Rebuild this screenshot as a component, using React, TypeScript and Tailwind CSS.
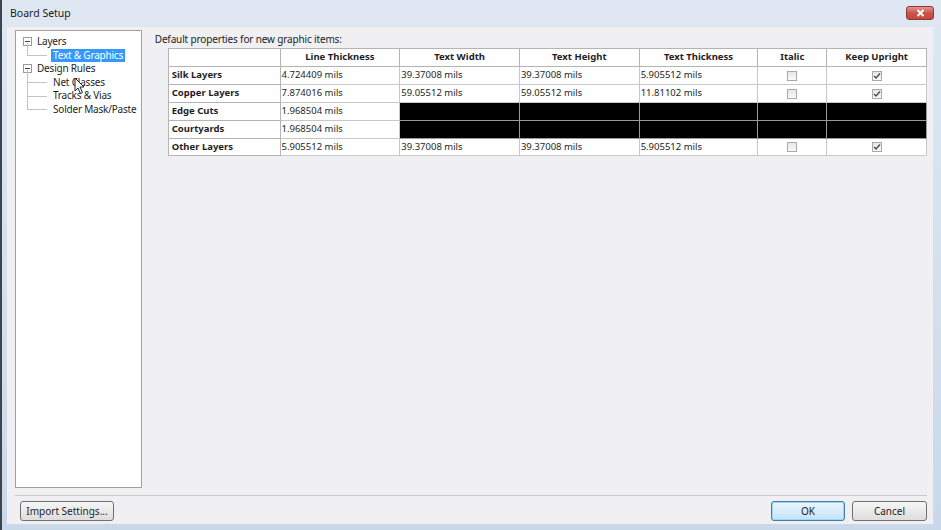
import React from "react";

const cols = ["Line Thickness", "Text Width", "Text Height", "Text Thickness", "Italic", "Keep Upright"];

type Row = {
  name: string;
  values: string[];
  black?: boolean;
};

const rows: Row[] = [
  { name: "Silk Layers", values: ["4.724409 mils", "39.37008 mils", "39.37008 mils", "5.905512 mils"] },
  { name: "Copper Layers", values: ["7.874016 mils", "59.05512 mils", "59.05512 mils", "11.81102 mils"] },
  { name: "Edge Cuts", values: ["1.968504 mils"], black: true },
  { name: "Courtyards", values: ["1.968504 mils"], black: true },
  { name: "Other Layers", values: ["5.905512 mils", "39.37008 mils", "39.37008 mils", "5.905512 mils"] },
];

function Check({ checked }: { checked?: boolean }) {
  return (
    <div className="mx-auto w-[10px] h-[10px] border border-[#a9a9a9] bg-gradient-to-b from-[#e6e6e6] to-[#fafafa] flex items-center justify-center">
      {checked && (
        <svg width="8" height="8" viewBox="0 0 8 8">
          <path d="M1 4 L3 6 L7 1.5" fill="none" stroke="#4a4a4a" strokeWidth="1.3" />
        </svg>
      )}
    </div>
  );
}

function Expander() {
  return (
    <div className="w-[9px] h-[9px] border border-[#9a9a9a] bg-white flex items-center justify-center">
      <div className="w-[5px] h-px bg-[#444]" />
    </div>
  );
}

export default function App() {
  return (
    <div
      className="relative w-[941px] h-[530px] flex flex-col bg-gradient-to-b from-[#dfe8f2] to-[#c9d9ea] border-l-2 border-[#3b4450] overflow-hidden text-[#1e1e1e]"
      style={{ fontFamily: '"Noto Sans", "Open Sans", sans-serif' }}
    >
      {/* title bar */}
      <div className="h-[27px] flex items-center justify-between pl-[8px] pr-[7px]">
        <span className="text-[10.5px] text-[#1a1a1a]">Board Setup</span>
        <div className="w-[28px] h-[14px] mb-[2px] rounded-[3px] border border-[#8a3a35] bg-gradient-to-b from-[#e3958d] via-[#c9544b] to-[#c14a40] flex items-center justify-center">
          <svg width="9" height="8" viewBox="0 0 9 8">
            <path d="M1.5 1 L7.5 7 M7.5 1 L1.5 7" stroke="white" strokeWidth="2" />
          </svg>
        </div>
      </div>

      {/* client area */}
      <div className="flex-1 ml-[5px] mr-[8px] mb-[6px] bg-[#f0eff1] flex flex-col pl-[8px] pr-[6px]">
        <div className="flex mt-[3px]">
          {/* tree */}
          <div className="w-[127px] h-[458px] bg-white border border-[#a0a0a0] text-[10px] tracking-[-0.2px] leading-[13.5px] pt-[4px] pl-[7px] relative whitespace-nowrap">
            <div className="flex items-center gap-[5px]">
              <Expander />
              <span>Layers</span>
            </div>
            <div className="flex items-center">
              <div className="w-[20px] ml-[4px] h-[13px] border-l border-b border-[#c4c4c4] -translate-y-[6px]" />
              <span className="ml-[4px] px-[2px] bg-[#3399ff] text-white">Text &amp; Graphics</span>
            </div>
            <div className="flex items-center gap-[5px]">
              <Expander />
              <span>Design Rules</span>
            </div>
            {["Net Classes", "Tracks & Vias", "Solder Mask/Paste"].map((t) => (
              <div key={t} className="flex items-center">
                <div className="w-[20px] ml-[4px] h-[13.5px] border-l border-b border-[#c4c4c4] -translate-y-[6px]" />
                <span className="ml-[6px]">{t}</span>
              </div>
            ))}
            {/* mouse cursor */}
            <svg className="absolute left-[58px] top-[46px]" width="12" height="18" viewBox="0 0 12 18">
              <path d="M1 1 L1 14 L4 11 L6.5 16.5 L8.5 15.5 L6 10 L10 10 Z" fill="white" stroke="#222" strokeWidth="1" />
            </svg>
          </div>

          {/* right content */}
          <div className="ml-[13px] flex flex-col">
            <div className="text-[10px] tracking-[-0.15px] mt-[1px] h-[16px] leading-[16px]">Default properties for new graphic items:</div>
            <table className="ml-[13px] mt-[1px] border-collapse table-fixed border border-[#9c9c9c] text-[9.5px]">
              <colgroup>
                <col className="w-[112px]" />
                <col className="w-[120px]" />
                <col className="w-[120px]" />
                <col className="w-[120px]" />
                <col className="w-[119px]" />
                <col className="w-[69px]" />
                <col className="w-[100px]" />
              </colgroup>
              <thead>
                <tr className="h-[18px] bg-white">
                  <th className="border border-[#b4b4b4]" />
                  {cols.map((c) => (
                    <th key={c} className="border border-[#b4b4b4] font-bold text-center p-0">
                      {c}
                    </th>
                  ))}
                </tr>
              </thead>
              <tbody>
                {rows.map((r, i) => (
                  <tr key={r.name} className={i === 4 ? "h-[17px]" : "h-[18px]"}>
                    <td className="border border-[#b4b4b4] bg-white font-bold pl-[3px] p-0">{r.name}</td>
                    <td className="border border-[#c8c8c8] bg-white pl-[1px] p-0">{r.values[0]}</td>
                    {r.black ? (
                      [0, 1, 2, 3, 4].map((k) => (
                        <td key={k} className="border border-[#9a9a9a] bg-black p-0" />
                      ))
                    ) : (
                      <>
                        <td className="border border-[#c8c8c8] bg-white pl-[1px] p-0">{r.values[1]}</td>
                        <td className="border border-[#c8c8c8] bg-white pl-[1px] p-0">{r.values[2]}</td>
                        <td className="border border-[#c8c8c8] bg-white pl-[1px] p-0">{r.values[3]}</td>
                        <td className="border border-[#c8c8c8] bg-white p-0">
                          <Check />
                        </td>
                        <td className="border border-[#c8c8c8] bg-white p-0">
                          <Check checked />
                        </td>
                      </>
                    )}
                  </tr>
                ))}
              </tbody>
            </table>
          </div>
        </div>

        <div className="mt-[7px] h-px bg-[#c9c9c9]" />

        <div className="flex items-center mt-[5px] text-[10px]">
          <button className="ml-[5px] w-[94px] h-[20px] rounded-[3px] border border-[#707070] bg-gradient-to-b from-[#f6f6f6] to-[#dddddd]">
            Import Settings...
          </button>
          <div className="flex-1" />
          <button className="w-[74px] h-[20px] rounded-[3px] border border-[#3c7fb1] bg-gradient-to-b from-[#eaf6fd] to-[#c4e3f6] shadow-[inset_0_0_0_1px_#9fd5f5]">
            OK
          </button>
          <button className="ml-[7px] w-[75px] h-[20px] rounded-[3px] border border-[#707070] bg-gradient-to-b from-[#f6f6f6] to-[#dddddd]">
            Cancel
          </button>
        </div>
      </div>
    </div>
  );
}
